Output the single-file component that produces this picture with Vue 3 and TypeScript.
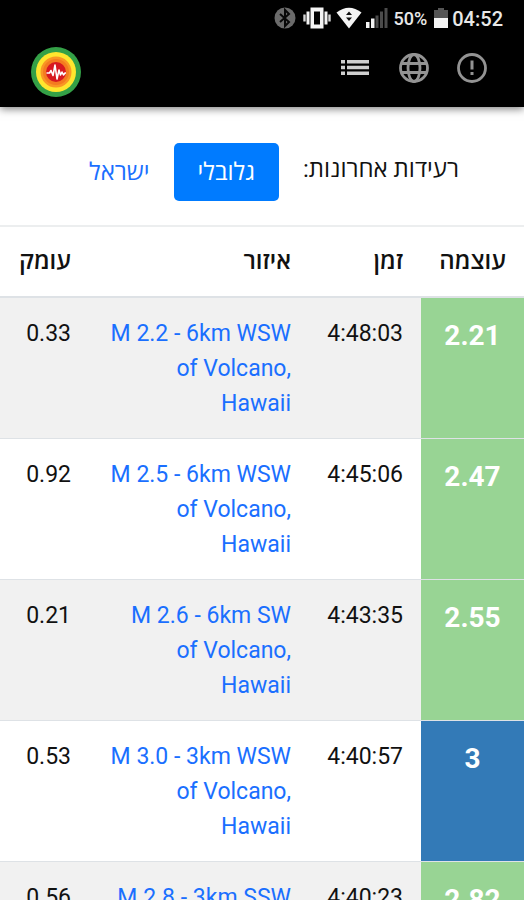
<script setup lang="ts">
import { ref } from 'vue'

interface Quake {
  magnitude: number
  time: string
  region: string
  depth: number
}

const scope = ref<'global' | 'israel'>('global')

const quakes: Quake[] = [
  { magnitude: 2.21, time: '4:48:03', region: 'M 2.2 - 6km WSW of Volcano, Hawaii', depth: 0.33 },
  { magnitude: 2.47, time: '4:45:06', region: 'M 2.5 - 6km WSW of Volcano, Hawaii', depth: 0.92 },
  { magnitude: 2.55, time: '4:43:35', region: 'M 2.6 - 6km SW of Volcano, Hawaii', depth: 0.21 },
  { magnitude: 3, time: '4:40:57', region: 'M 3.0 - 3km WSW of Volcano, Hawaii', depth: 0.53 },
  { magnitude: 2.82, time: '4:40:23', region: 'M 2.8 - 3km SSW of Volcano, Hawaii', depth: 0.56 },
]
</script>

<template>
  <div class="app" dir="rtl" lang="he">
    <header class="top">
      <div class="status" dir="ltr">
        <svg width="22" height="22" viewBox="0 0 22 22" aria-hidden="true">
          <circle cx="11" cy="11" r="10.5" fill="#6b6b6b" />
          <path d="M6 7l9 8-4 4V3l4 4-9 8" fill="none" stroke="#080808" stroke-width="2" />
        </svg>
        <svg class="vibrate" width="28" height="22" viewBox="0 0 28 22" aria-hidden="true">
          <path d="M7.500 .500h13v21h-13zM11 4.500v13h6v-13z" fill="#f4f4f4" fill-rule="evenodd" />
          <path d="M5 4.500v13M23 4.500v13" stroke="#f4f4f4" stroke-width="3" />
          <path d="M1.500 7.500v7M26.500 7.500v7" stroke="#d5d5d5" stroke-width="2.400" />
        </svg>
        <svg class="wifi" width="26" height="22" viewBox="0 0 26 22" aria-hidden="true">
          <path d="M.500 5.500Q13-4 25.500 5.500L13 21.500z" fill="#f4f4f4" />
          <path d="M13 4.500l3 3.500h-6zM13 14l3-3.500h-6z" fill="#111" />
        </svg>
        <svg class="signal" width="22" height="22" viewBox="0 0 22 22" aria-hidden="true">
          <path d="M0 15h3.500v6H0zM5 11.500h3.500V21H5z" fill="#f4f4f4" />
          <path d="M9.500 8.500h3V21h-3zM14 4.500h3V21h-3zM18.500 1h3v20h-3z" fill="#4b4b4b" />
        </svg>
        <span class="percent">50%</span>
        <svg class="battery" width="14" height="22" viewBox="0 0 14 22" aria-hidden="true">
          <path d="M4 1h6v2h4v8H0V3h4z" fill="#555" />
          <path d="M0 11h14v10H0z" fill="#f4f4f4" />
        </svg>
        <span class="clock">04:52</span>
      </div>
      <div class="bar" dir="ltr">
        <a class="logo" href="#" aria-label="דף הבית">
          <svg width="50" height="50" viewBox="0 0 50 50" aria-hidden="true">
            <circle cx="25" cy="25" r="25" fill="#34a047" />
            <circle cx="25" cy="25" r="20" fill="#ffe62e" />
            <circle cx="25" cy="25" r="15.500" fill="#f99724" />
            <circle cx="25" cy="25" r="13" fill="#f47b20" />
            <circle cx="25" cy="25" r="10" fill="#d71920" />
            <path d="M15.500 26h3l1.500-2.500 2 5L24 18l2 14 2-9 1.500 5 1.500-3 1.500 3 1.500-2h1" fill="none" stroke="#fff" stroke-width="1.600" stroke-linejoin="round" />
          </svg>
        </a>
        <nav class="tools">
          <button type="button" aria-label="רשימה">
            <svg width="30" height="30" viewBox="0 0 30 30" aria-hidden="true">
              <path d="M0 7h4v3.500H0zM0 12.800h4v3.500H0zM0 18.600h4v3.500H0zM6 7h22v3.500H6zM6 12.800h22v3.500H6zM6 18.600h22v3.500H6z" fill="#cfcfcf" />
            </svg>
          </button>
          <button type="button" aria-label="מפה">
            <svg width="30" height="30" viewBox="0 0 30 30" fill="none" stroke="#939393" stroke-width="2.800" aria-hidden="true">
              <circle cx="15" cy="15" r="13.500" />
              <ellipse cx="15" cy="15" rx="6" ry="13.500" />
              <path d="M3 10.500h24M3 19.500h24" />
            </svg>
          </button>
          <button type="button" aria-label="אודות">
            <svg width="30" height="30" viewBox="0 0 30 30" aria-hidden="true">
              <circle cx="15" cy="15" r="13.500" fill="none" stroke="#939393" stroke-width="2.800" />
              <path d="M13.500 7.500h3v9h-3zM13.500 19h3v3h-3z" fill="#939393" />
            </svg>
          </button>
        </nav>
      </div>
    </header>

    <main>
      <div class="filter">
        <span class="label">רעידות אחרונות:</span>
        <button type="button" :class="{ active: scope === 'global' }" @click="scope = 'global'">גלובלי</button>
        <button type="button" :class="{ active: scope === 'israel' }" @click="scope = 'israel'">ישראל</button>
      </div>
      <table>
        <colgroup>
          <col class="c-mag" />
          <col class="c-time" />
          <col />
          <col class="c-depth" />
        </colgroup>
        <thead>
          <tr>
            <th scope="col">עוצמה</th>
            <th scope="col">זמן</th>
            <th scope="col">איזור</th>
            <th scope="col">עומק</th>
          </tr>
        </thead>
        <tbody>
          <tr v-for="q in quakes" :key="q.time">
            <td class="mag" :class="{ strong: q.magnitude >= 3 }">{{ q.magnitude }}</td>
            <td>{{ q.time }}</td>
            <td><a href="#" dir="ltr">{{ q.region }}</a></td>
            <td>{{ q.depth }}</td>
          </tr>
        </tbody>
      </table>
    </main>
  </div>
</template>

<style>
html {
  scrollbar-width: none;
}

body {
  margin: 0;
  background: #fff;
}
</style>

<style scoped>
.app {
  font-family: Roboto, "Open Sans", "Noto Sans", sans-serif;
  font-size: 23px;
  line-height: 35px;
  color: #111;
}

.top {
  background: #000;
  box-shadow: 0 2px 8px rgba(0, 0, 0, 0.5);
}

.status {
  display: flex;
  align-items: center;
  justify-content: flex-end;
  height: 36px;
  padding-right: 21px;
  color: #e8e8e8;
}

.status svg {
  flex: none;
}

.vibrate {
  margin-left: 7px;
}

.wifi {
  margin-left: 5px;
}

.signal {
  margin-left: 4px;
}

.percent {
  margin-left: 6px;
  font-size: 18px;
  font-weight: 500;
}

.battery {
  margin: 0 4px 0 7px;
}

.clock {
  padding-top: 2px;
  font-size: 20px;
  font-weight: 500;
}

.bar {
  display: flex;
  align-items: center;
  justify-content: space-between;
  height: 71px;
  padding: 0 37px 0 31px;
}

.logo {
  display: block;
  line-height: 0;
}

.tools {
  display: flex;
  gap: 28px;
  padding-bottom: 8px;
}

.tools button {
  display: block;
  padding: 0;
  border: 0;
  background: none;
  line-height: 0;
}

.filter {
  display: flex;
  align-items: center;
  justify-content: center;
  padding: 36px 0 24px;
  font-size: 24px;
}

.label {
  padding: 0 0 6px 24px;
}

.filter button {
  padding: 12px 24px 11px;
  border: 0;
  border-radius: 5px;
  background: none;
  color: #1a6fff;
  font: inherit;
}

.filter button.active {
  background: #007bff;
  color: #fff;
}

table {
  width: 100%;
  table-layout: fixed;
  border-collapse: collapse;
}

.c-mag {
  width: 103px;
}

.c-time {
  width: 112px;
}

.c-depth {
  width: 89px;
}

th,
td {
  padding: 17px 18px 18px 16px;
  text-align: right;
  vertical-align: top;
}

th {
  padding-bottom: 17px;
  border-top: 2px solid #eceeef;
  border-bottom: 2px solid #dee2e6;
  font-size: 24px;
  font-weight: 600;
}

td {
  padding-top: 18px;
  padding-bottom: 17px;
  border-bottom: 1px solid #dee2e6;
}

tbody tr {
  border-bottom: 1px solid #dee2e6;
}

tbody tr:nth-child(odd) {
  background: #f1f1f1;
}

td a {
  display: block;
  color: #1a6fff;
  text-decoration: none;
}

td.mag {
  padding: 20px 0 15px;
  background: #98d494;
  color: #fff;
  font-size: 28px;
  font-weight: 700;
  text-align: center;
}

td.mag.strong {
  background: #337ab7;
}
</style>
